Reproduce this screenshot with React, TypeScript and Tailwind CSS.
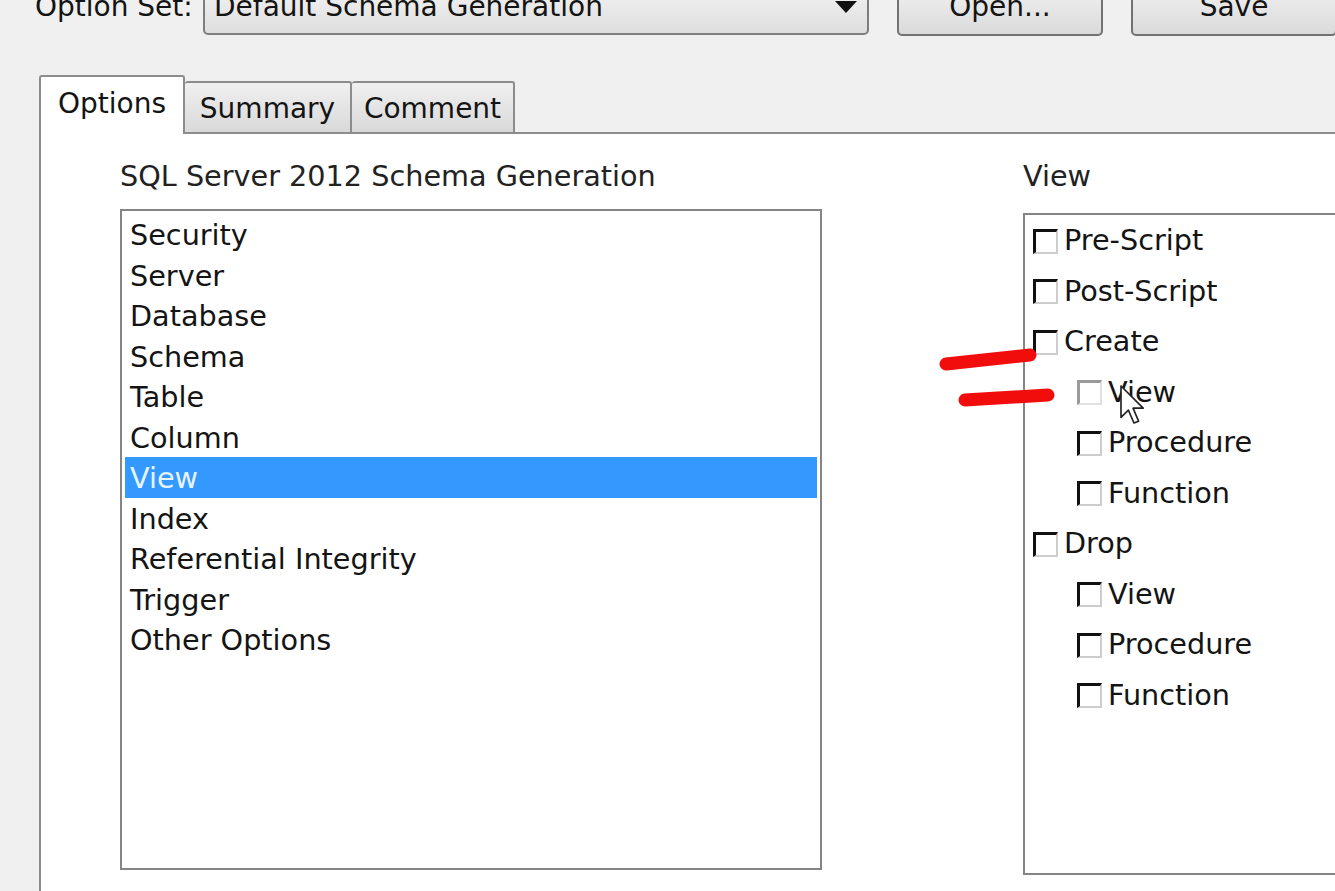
import React from "react";

const categories = [
  "Security",
  "Server",
  "Database",
  "Schema",
  "Table",
  "Column",
  "View",
  "Index",
  "Referential Integrity",
  "Trigger",
  "Other Options",
];

const viewOptions = [
  { label: "Pre-Script", level: 0 },
  { label: "Post-Script", level: 0 },
  { label: "Create", level: 0 },
  { label: "View", level: 1, hover: true },
  { label: "Procedure", level: 1 },
  { label: "Function", level: 1 },
  { label: "Drop", level: 0 },
  { label: "View", level: 1 },
  { label: "Procedure", level: 1 },
  { label: "Function", level: 1 },
];

function CheckBox({ faded }: { faded?: boolean }) {
  return (
    <div
      className={
        faded
          ? "h-[25px] w-[25px] shrink-0 border-t-[3px] border-l-[3px] border-r-2 border-b-2 border-t-[#9a9a9a] border-l-[#9a9a9a] border-r-[#e0e0e0] border-b-[#e0e0e0] bg-white"
          : "h-[25px] w-[25px] shrink-0 border-t-[3px] border-l-[3px] border-r-2 border-b-2 border-t-[#111] border-l-[#111] border-r-[#cdcdcd] border-b-[#cdcdcd] bg-white"
      }
    />
  );
}

function TopButton({ label }: { label: string }) {
  return (
    <div className="ml-[28px] flex h-[57px] w-[206px] shrink-0 items-center justify-center rounded-b-[5px] border-2 border-[#727272] bg-gradient-to-b from-[#f3f3f3] to-[#dadada]">
      <span className="-mt-[2px]">{label}</span>
    </div>
  );
}

export default function App() {
  return (
    <div className="relative flex h-[891px] w-[1335px] flex-col overflow-hidden bg-[#f0f0f0] font-['DejaVu_Sans',sans-serif] text-[28px] text-[#141414]">
      {/* option set row */}
      <div className="-mt-[20px] flex h-[55px] shrink-0 items-center pl-[35px]">
        <span className="-mt-[2px] w-[160px] shrink-0">Option Set:</span>
        <div className="ml-[8px] flex h-full w-[666px] shrink-0 items-center justify-between rounded-b-[5px] border-2 border-[#7e7e7e] bg-gradient-to-b from-[#f5f5f5] to-[#dedede] pl-[9px] pr-[10px]">
          <span className="-mt-[2px]">Default Schema Generation</span>
          <svg width="22" height="12" viewBox="0 0 22 12" className="-mt-[2px]">
            <path d="M0 0 L22 0 L11 12 Z" fill="#111" />
          </svg>
        </div>
        <TopButton label="Open..." />
        <TopButton label="Save" />
      </div>

      {/* tabs */}
      <div className="mt-[40px] flex shrink-0 items-end pl-[39px]">
        <div className="relative z-10 -mb-[2px] flex h-[59px] w-[146px] items-center rounded-t-[3px] border-2 border-b-0 border-[#8c8c8c] bg-white pb-[3px] pl-[17px]">
          Options
        </div>
        <div className="flex h-[51px] w-[167px] items-center justify-center rounded-t-[3px] border-2 border-b-0 border-l-0 border-[#8c8c8c] bg-gradient-to-b from-[#f0f0f0] to-[#d9d9d9] pt-[3px]">
          Summary
        </div>
        <div className="flex h-[51px] w-[163px] items-center justify-center rounded-t-[3px] border-2 border-b-0 border-l-0 border-[#8c8c8c] bg-gradient-to-b from-[#f0f0f0] to-[#d9d9d9] pt-[3px]">
          Comment
        </div>
      </div>

      {/* tab page */}
      <div className="ml-[39px] flex flex-1 border-t-2 border-l-2 border-[#8c8c8c] bg-white pt-[27px] text-[28.7px]">
        <div className="ml-[79px] flex w-[702px] shrink-0 flex-col">
          <div className="h-[30px] leading-[30px] text-[#222]">SQL Server 2012 Schema Generation</div>
          <div className="mt-[18px] h-[661px] border-2 border-[#858585] bg-white p-[3px]">
            {categories.map((c) =>
              c === "View" ? (
                <div key={c} className="h-[40.5px] bg-[#3399ff] pl-[5px] pt-[2px] leading-[38.5px] text-[#e6f4ff]">
                  {c}
                </div>
              ) : (
                <div key={c} className="h-[40.5px] pl-[5px] pt-[2px] leading-[38.5px]">
                  {c}
                </div>
              )
            )}
          </div>
        </div>

        <div className="ml-[201px] flex w-[420px] shrink-0 flex-col">
          <div className="h-[30px] leading-[30px] text-[#222]">View</div>
          <div className="mt-[22px] h-[662px] border-2 border-[#858585] bg-white pt-[1px] pl-[8px]">
            {viewOptions.map((o, i) => (
              <div
                key={i}
                className={
                  o.level === 1
                    ? "flex h-[50.5px] items-center gap-[6px] pl-[44px]"
                    : "flex h-[50.5px] items-center gap-[6px]"
                }
              >
                <CheckBox faded={o.hover} />
                <span className="-mt-[1px]">{o.label}</span>
              </div>
            ))}
          </div>
        </div>
      </div>

      {/* annotation marks and mouse pointer */}
      <svg className="pointer-events-none absolute inset-0" width="1335" height="891">
        <line x1="946" y1="364" x2="1030" y2="355" stroke="#f20d0d" strokeWidth="13" strokeLinecap="round" />
        <line x1="965" y1="400" x2="1048" y2="395" stroke="#f20d0d" strokeWidth="13" strokeLinecap="round" />
        <g transform="translate(1121 386) scale(1.85)">
          <path
            d="M0 0 L0 17 L4 13 L7 20 L9.5 19 L6.5 12 L12 12 Z"
            fill="#ffffff"
            stroke="#222"
            strokeWidth="0.9"
            strokeLinejoin="round"
          />
        </g>
      </svg>
    </div>
  );
}
